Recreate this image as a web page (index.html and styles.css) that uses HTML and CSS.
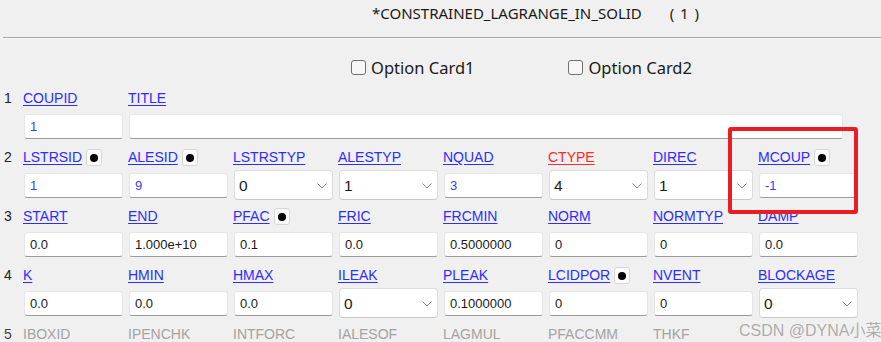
FILE: index.html
```html
<!DOCTYPE html>
<html lang="en">
<head>
    <meta charset="UTF-8">
    <title>*CONSTRAINED_LAGRANGE_IN_SOLID</title>
    <link rel="stylesheet" href="styles.css">
</head>
<body>
<div id="app">
    <div class="head">
        <span class="kw">*CONSTRAINED_LAGRANGE_IN_SOLID</span>
        <span class="cnt">( 1 )</span>
    </div>
    <div class="sep"></div>

    <div class="options">
        <label class="opt"><span class="box"></span>Option Card1</label>
        <label class="opt"><span class="box"></span>Option Card2</label>
    </div>

    <!-- card 1 -->
    <div class="card">
        <div class="num">1</div>
        <div class="lab"><a href="#">COUPID</a></div>
        <div class="lab"><a href="#">TITLE</a></div>
        <input class="fld blue" value="1" readonly>
        <input class="fld wide" value="" readonly>
    </div>

    <!-- card 2 -->
    <div class="card">
        <div class="num">2</div>
        <div class="lab"><a href="#">LSTRSID</a><span class="dot"></span></div>
        <div class="lab"><a href="#">ALESID</a><span class="dot"></span></div>
        <div class="lab"><a href="#">LSTRSTYP</a></div>
        <div class="lab"><a href="#">ALESTYP</a></div>
        <div class="lab"><a href="#">NQUAD</a></div>
        <div class="lab"><a href="#" class="red">CTYPE</a></div>
        <div class="lab"><a href="#">DIREC</a></div>
        <div class="lab"><a href="#">MCOUP</a><span class="dot"></span></div>
        <input class="fld blue" value="1" readonly>
        <input class="fld blue" value="9" readonly>
        <div class="sel"><span>0</span><svg width="10" height="6" viewBox="0 0 10 6"><path d="M0.5 0.5 L5 5 L9.5 0.5" fill="none" stroke="#8a8a8a"/></svg></div>
        <div class="sel"><span>1</span><svg width="10" height="6" viewBox="0 0 10 6"><path d="M0.5 0.5 L5 5 L9.5 0.5" fill="none" stroke="#8a8a8a"/></svg></div>
        <input class="fld blue" value="3" readonly>
        <div class="sel"><span>4</span><svg width="10" height="6" viewBox="0 0 10 6"><path d="M0.5 0.5 L5 5 L9.5 0.5" fill="none" stroke="#8a8a8a"/></svg></div>
        <div class="sel"><span>1</span><svg width="10" height="6" viewBox="0 0 10 6"><path d="M0.5 0.5 L5 5 L9.5 0.5" fill="none" stroke="#8a8a8a"/></svg></div>
        <input class="fld blue" value="-1" readonly>
    </div>

    <!-- card 3 -->
    <div class="card">
        <div class="num">3</div>
        <div class="lab"><a href="#">START</a></div>
        <div class="lab"><a href="#">END</a></div>
        <div class="lab"><a href="#">PFAC</a><span class="dot"></span></div>
        <div class="lab"><a href="#">FRIC</a></div>
        <div class="lab"><a href="#">FRCMIN</a></div>
        <div class="lab"><a href="#">NORM</a></div>
        <div class="lab"><a href="#">NORMTYP</a></div>
        <div class="lab"><a href="#">DAMP</a></div>
        <input class="fld" value="0.0" readonly>
        <input class="fld" value="1.000e+10" readonly>
        <input class="fld" value="0.1" readonly>
        <input class="fld" value="0.0" readonly>
        <input class="fld" value="0.5000000" readonly>
        <input class="fld" value="0" readonly>
        <input class="fld" value="0" readonly>
        <input class="fld" value="0.0" readonly>
    </div>

    <!-- card 4 -->
    <div class="card">
        <div class="num">4</div>
        <div class="lab"><a href="#">K</a></div>
        <div class="lab"><a href="#">HMIN</a></div>
        <div class="lab"><a href="#">HMAX</a></div>
        <div class="lab"><a href="#">ILEAK</a></div>
        <div class="lab"><a href="#">PLEAK</a></div>
        <div class="lab"><a href="#">LCIDPOR</a><span class="dot"></span></div>
        <div class="lab"><a href="#">NVENT</a></div>
        <div class="lab"><a href="#">BLOCKAGE</a></div>
        <input class="fld" value="0.0" readonly>
        <input class="fld" value="0.0" readonly>
        <input class="fld" value="0.0" readonly>
        <div class="sel"><span>0</span><svg width="10" height="6" viewBox="0 0 10 6"><path d="M0.5 0.5 L5 5 L9.5 0.5" fill="none" stroke="#8a8a8a"/></svg></div>
        <input class="fld" value="0.1000000" readonly>
        <input class="fld" value="0" readonly>
        <input class="fld" value="0" readonly>
        <div class="sel"><span>0</span><svg width="10" height="6" viewBox="0 0 10 6"><path d="M0.5 0.5 L5 5 L9.5 0.5" fill="none" stroke="#8a8a8a"/></svg></div>
    </div>

    <!-- card 5 (disabled) -->
    <div class="card off">
        <div class="num">5</div>
        <div class="lab">IBOXID</div>
        <div class="lab">IPENCHK</div>
        <div class="lab">INTFORC</div>
        <div class="lab">IALESOF</div>
        <div class="lab">LAGMUL</div>
        <div class="lab">PFACCMM</div>
        <div class="lab">THKF</div>
        <div class="lab"></div>
    </div>

    <div class="mark"></div>
    <div class="wm">CSDN @DYNA小菜</div>
</div>
</body>
</html>
```

FILE: styles.css
```css
*{
    margin: 0;
    padding: 0;
    box-sizing: border-box;
}
html, body{
    background: #f0f0f0;
    overflow: hidden;
}
#app{
    position: relative;
    width: 881px;
    height: 342px;
    overflow: hidden;
    padding-left: 3px;
    font-family: "Liberation Sans", Arial, sans-serif;
    font-size: 14px;
    color: #1e1e1e;
}
.head{
    height: 37px;
    line-height: 27px;
    padding-left: 369px;
    font-family: "Noto Sans", "Open Sans", sans-serif;
    font-size: 15px;
    color: #1a1a1a;
    white-space: nowrap;
}
.head .cnt{
    margin-left: 24px;
    letter-spacing: 1px;
}
.sep{
    height: 2px;
    border-top: 1px solid #a6a6a6;
    border-bottom: 1px solid #fbfbfb;
}
.options{
    display: flex;
    gap: 94px;
    height: 49px;
    padding: 17px 0 0 348px;
}
.opt{
    display: flex;
    align-items: center;
    gap: 5px;
    height: 22px;
    font-family: "Noto Sans", "Open Sans", sans-serif;
    font-size: 16.5px;
    color: #1a1a1a;
}
.box{
    width: 15px;
    height: 15px;
    border: 1px solid #6f6f6f;
    border-radius: 3px;
    background: #f7f7f7;
}
.card{
    display: grid;
    grid-template-columns: 15px repeat(8, 100px);
    grid-template-rows: 20px 30px;
    column-gap: 5px;
    row-gap: 3px;
    margin-bottom: 6px;
    align-items: center;
}
.card.off{
    grid-template-rows: 20px;
}
.num{
    grid-row: 1 / span 2;
    align-self: start;
    line-height: 20px;
    padding-left: 1px;
    color: #222;
}
.lab{
    grid-row: 1;
    display: flex;
    align-items: center;
    gap: 4px;
    height: 20px;
    white-space: nowrap;
}
.lab a{
    color: #2d2dff;
    text-decoration: underline;
    text-underline-offset: 2px;
}
.lab a.red{
    color: #ff2a2a;
}
.dot{
    position: relative;
    width: 16px;
    height: 17px;
    border: 1px solid #d6d6d6;
    border-radius: 3px;
    background: #fcfcfc;
}
.dot::after{
    content: "";
    position: absolute;
    left: 3px;
    top: 4px;
    width: 8px;
    height: 8px;
    border-radius: 50%;
    background: #000;
}
.fld{
    grid-row: 2;
    width: 99px;
    height: 25px;
    margin-left: 1px;
    padding: 0 5px;
    border: 1px solid #e6e6e6;
    border-bottom: 1px solid #9b9b9b;
    border-radius: 3px;
    background: #fff;
    font-family: "Liberation Sans", Arial, sans-serif;
    font-size: 13px;
    color: #1a1a1a;
    outline: none;
}
.fld.blue{
    color: #3b3bff;
}
.fld.wide{
    grid-column: span 7;
    width: 714px;
}
.sel{
    grid-row: 2;
    display: flex;
    align-items: center;
    justify-content: space-between;
    width: 99px;
    height: 30px;
    margin-left: 1px;
    padding: 2px 5px 0 4px;
    border: 1px solid #dcdcdc;
    border-bottom-color: #c8c8c8;
    border-radius: 4px;
    background: #fff;
    font-size: 15.5px;
    color: #1a1a1a;
}
.off .lab{
    color: #a3a3a3;
}
.off .num{
    color: #444;
}
.mark{
    position: absolute;
    left: 728px;
    top: 127px;
    width: 130px;
    height: 87px;
    border: 4px solid #ec1c24;
    border-radius: 3px;
}
.wm{
    position: absolute;
    left: 739px;
    top: 317px;
    font-family: "Liberation Sans", "Noto Sans CJK SC", sans-serif;
    font-size: 16px;
    color: rgba(160, 160, 160, 0.85);
    white-space: nowrap;
}
```
